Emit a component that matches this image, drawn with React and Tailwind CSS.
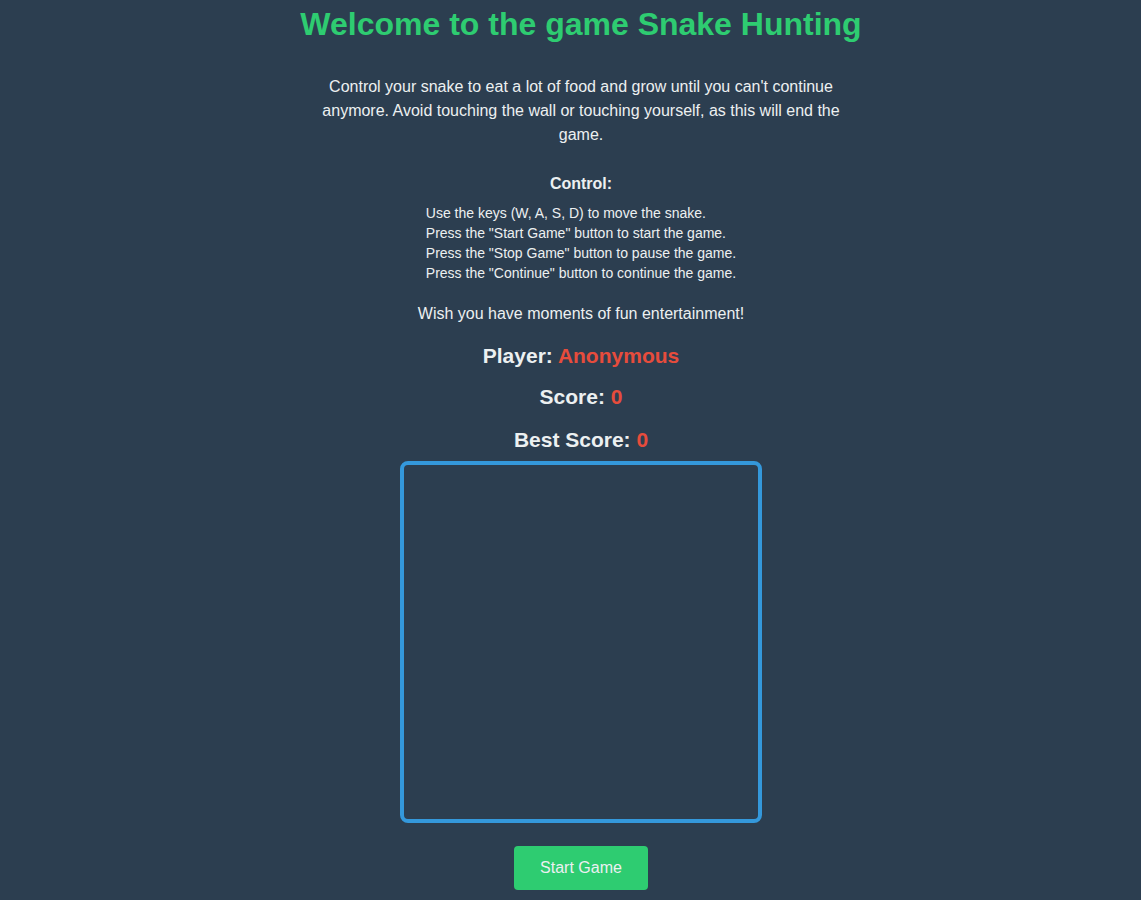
import React from "react";

const rules = [
  "Use the keys (W, A, S, D) to move the snake.",
  'Press the "Start Game" button to start the game.',
  'Press the "Stop Game" button to pause the game.',
  'Press the "Continue" button to continue the game.',
];

const Stat = ({ label, value, className = "" }) => (
  <h2 className={`text-[21px] leading-[28px] font-bold text-[#ecf0f1] ${className}`}>
    {label} <span className="text-[#e74c3c]">{value}</span>
  </h2>
);

export default function App() {
  return (
    <div className="min-h-[900px] bg-[#2c3e50] pl-[21px] font-['Liberation_Sans',Arial,sans-serif] text-[#ecf0f1]">
      <div className="flex flex-col items-center text-center">
        {/* Header */}
        <h1 className="mt-[6px] text-[32px] leading-[37px] font-bold text-[#2ecc71]">
          Welcome to the game Snake Hunting
        </h1>

        <p className="mt-[32px] w-[530px] text-[16px] leading-[24px]">
          Control your snake to eat a lot of food and grow until you can't continue anymore. Avoid touching the
          wall or touching yourself, as this will end the game.
        </p>

        {/* Controls */}
        <h3 className="mt-[25px] text-[16px] leading-[24px] font-bold">Control:</h3>
        <ul className="mt-[7px] text-left text-[14px] leading-[20px]">
          {rules.map((r) => (
            <li key={r}>{r}</li>
          ))}
        </ul>

        <p className="mt-[19px] text-[16px] leading-[24px]">Wish you have moments of fun entertainment!</p>

        {/* Stats */}
        <Stat label="Player:" value="Anonymous" className="mt-[16px]" />
        <Stat label="Score:" value="0" className="mt-[13px]" />
        <Stat label="Best Score:" value="0" className="mt-[15px]" />

        {/* Board */}
        <div className="mt-[7px] h-[362px] w-[362px] rounded-[8px] border-4 border-[#3498db] bg-[#2c3e50]" />

        <button className="mt-[23px] h-[44px] w-[134px] rounded-[4px] bg-[#2ecc71] text-[16px] text-[#ecf0f1]">
          Start Game
        </button>
      </div>
    </div>
  );
}
